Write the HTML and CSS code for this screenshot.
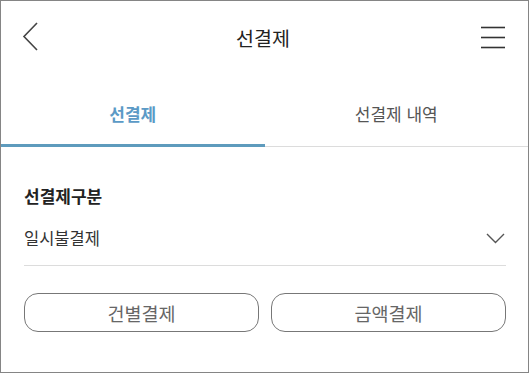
FILE: index.html
```html
<!DOCTYPE html>
<html lang="ko">
<head>
    <meta charset="UTF-8">
    <meta name="viewport" content="width=device-width, initial-scale=1.0">
    <title>선결제</title>
    <link rel="stylesheet" href="styles.css">
</head>
<body>
    <div class="page">
        <div class="top-bar">
            <svg class="back-icon" width="18" height="30" viewBox="0 0 18 30">
                <polyline points="15,1 2,14.5 15,28" fill="none" stroke="#444" stroke-width="1.6"/>
            </svg>
            <div class="top-title">선결제</div>
            <svg class="menu-icon" width="26" height="24" viewBox="0 0 26 24">
                <line x1="1" y1="2.5" x2="25" y2="2.5" stroke="#333" stroke-width="1.6"/>
                <line x1="1" y1="12.5" x2="25" y2="12.5" stroke="#333" stroke-width="1.6"/>
                <line x1="1" y1="22.5" x2="25" y2="22.5" stroke="#333" stroke-width="1.6"/>
            </svg>
        </div>
        <div class="tabs">
            <div class="tab active">선결제</div>
            <div class="tab">선결제 내역</div>
        </div>
        <div class="content">
            <div class="field-label">선결제구분</div>
            <div class="select-row">
                <span>일시불결제</span>
                <svg class="arrow-down" width="19" height="11" viewBox="0 0 19 11">
                    <polyline points="1,1 9.5,9.5 18,1" fill="none" stroke="#555" stroke-width="1.4"/>
                </svg>
            </div>
            <div class="button-row">
                <button class="pay-button">건별결제</button>
                <button class="pay-button">금액결제</button>
            </div>
        </div>
    </div>
</body>
</html>
```

FILE: styles.css
```css
body {
    margin: 0;
    background: #fff;
    font-family: "Noto Sans CJK KR", "Noto Sans", sans-serif;
}
.page {
    width: 529px;
    height: 373px;
    box-sizing: border-box;
    border: 1px solid #858585;
    overflow: hidden;
}
.top-bar {
    height: 72px;
    display: flex;
    align-items: center;
    justify-content: space-between;
    padding: 0 22px 0 21px;
}
.back-icon {
    display: block;
}
.top-title {
    font-size: 19.5px;
    color: #222;
    margin-left: 6px;
}
.menu-icon {
    display: block;
}
.tabs {
    display: flex;
    border-bottom: 1px solid #dcdcdc;
}
.tab {
    flex: 1;
    height: 61px;
    padding-top: 10px;
    display: flex;
    align-items: center;
    justify-content: center;
    font-size: 17px;
    color: #555;
}
.tab.active {
    color: #5b9ac6;
    font-weight: bold;
    border-bottom: 3px solid #5e9bbd;
    margin-bottom: -1px;
}
.tab:not(.active) {
    padding-bottom: 2px;
}
.content {
    padding: 0 22px 0 23px;
}
.field-label {
    margin-top: 37px;
    font-size: 17px;
    font-weight: bold;
    line-height: 24px;
    color: #222;
}
.select-row {
    display: flex;
    align-items: center;
    justify-content: space-between;
    padding: 18px 1px 15px 0;
    line-height: 24px;
    font-size: 16.5px;
    color: #333;
    border-bottom: 1px solid #dcdcdc;
}
.button-row {
    display: flex;
    gap: 12px;
    margin-top: 27px;
}
.pay-button {
    flex: 1;
    height: 39px;
    border: 1px solid #777;
    border-radius: 14px;
    background: #fff;
    font-family: inherit;
    font-size: 18.5px;
    color: #666;
    padding: 0;
}
```
